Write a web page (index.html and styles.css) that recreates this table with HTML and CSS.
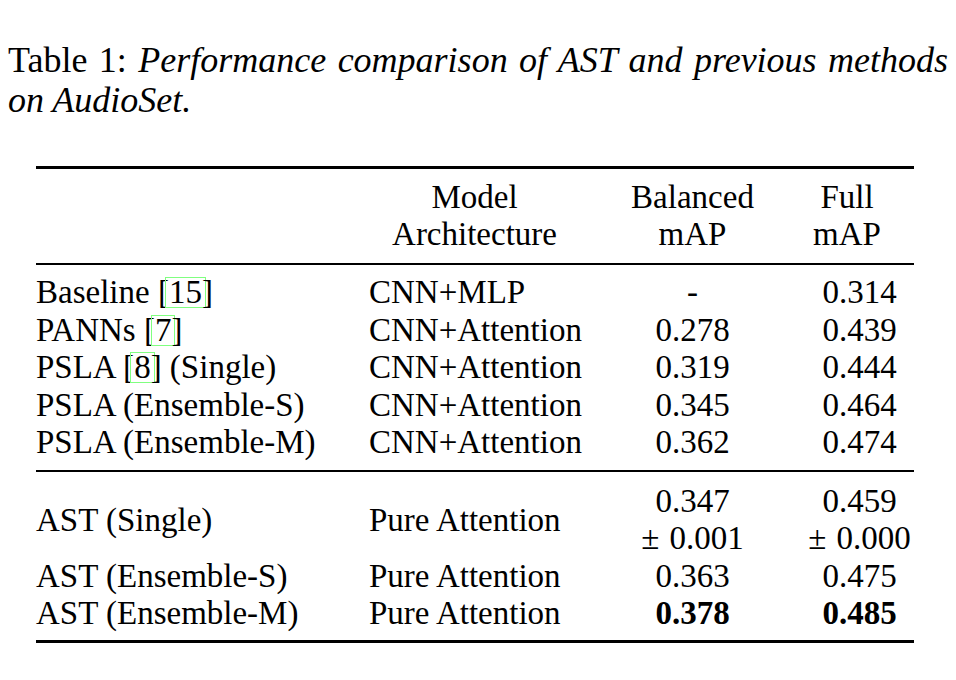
FILE: index.html
```html
<!DOCTYPE html>
<html>
<head>
<meta charset="utf-8">
<link rel="stylesheet" href="styles.css">
</head>
<body>
<div class="page">
  <div class="caption">
    <p class="cap-line cap-first"><span class="cap-label">Table 1:</span> <em>Performance comparison of AST and previous methods</em></p>
    <p class="cap-line"><em>on AudioSet.</em></p>
  </div>

  <div class="table">
    <div class="section head">
      <div class="cell"></div>
      <div class="cell center">Model<br>Architecture</div>
      <div class="cell center">Balanced<br>mAP</div>
      <div class="cell center full-head">Full<br>mAP</div>
    </div>

    <div class="section body">
      <div class="cell">Baseline [<span class="cite">15</span>]</div>
      <div class="cell">CNN+MLP</div>
      <div class="cell center">-</div>
      <div class="cell center">0.314</div>

      <div class="cell">PANNs [<span class="cite">7</span>]</div>
      <div class="cell">CNN+Attention</div>
      <div class="cell center">0.278</div>
      <div class="cell center">0.439</div>

      <div class="cell">PSLA [<span class="cite">8</span>] (Single)</div>
      <div class="cell">CNN+Attention</div>
      <div class="cell center">0.319</div>
      <div class="cell center">0.444</div>

      <div class="cell">PSLA (Ensemble-S)</div>
      <div class="cell">CNN+Attention</div>
      <div class="cell center">0.345</div>
      <div class="cell center">0.464</div>

      <div class="cell">PSLA (Ensemble-M)</div>
      <div class="cell">CNN+Attention</div>
      <div class="cell center">0.362</div>
      <div class="cell center">0.474</div>
    </div>

    <div class="section body ast">
      <div class="cell middle">AST (Single)</div>
      <div class="cell middle">Pure Attention</div>
      <div class="cell center">0.347<br><span class="pm">±</span>0.001</div>
      <div class="cell center">0.459<br><span class="pm">±</span>0.000</div>

      <div class="cell">AST (Ensemble-S)</div>
      <div class="cell">Pure Attention</div>
      <div class="cell center">0.363</div>
      <div class="cell center">0.475</div>

      <div class="cell">AST (Ensemble-M)</div>
      <div class="cell">Pure Attention</div>
      <div class="cell center bold">0.378</div>
      <div class="cell center bold">0.485</div>
    </div>
  </div>
</div>
</body>
</html>
```

FILE: styles.css
```css
html, body {
  margin: 0;
  padding: 0;
  background: #ffffff;
}

body {
  color: #000000;
  font-family: "Liberation Serif", "Times New Roman", serif;
}

.page {
  width: 956px;
  height: 680px;
  padding-top: 40px;
  box-sizing: border-box;
}

.caption {
  margin-left: 8px;
  width: 940px;
  font-size: 36px;
  line-height: 40px;
}

.cap-line {
  margin: 0;
  white-space: nowrap;
}

.cap-first {
  white-space: normal;
  text-align: justify;
  text-align-last: justify;
}

.caption em {
  font-style: italic;
}

.table {
  margin: 46px 0 0 36px;
  width: 878px;
  border-top: 3px solid #000;
  border-bottom: 3px solid #000;
  font-size: 33px;
  line-height: 37.4px;
}

.section {
  display: grid;
  grid-template-columns: 282px 211px 123px 109px;
  column-gap: 51px;
}

.head {
  padding: 10px 0 9px;
  border-bottom: 2px solid #000;
}

.body {
  padding: 9.5px 0 8.5px;
}

.ast {
  border-top: 2px solid #000;
  padding: 11px 0 7.5px;
}

.cell {
  white-space: nowrap;
}

.center {
  text-align: center;
}

.middle {
  align-self: center;
}

.full-head {
  padding-right: 25px;
}

.bold {
  font-weight: bold;
}

.pm {
  margin-right: 10px;
}

.cite {
  display: inline-block;
  line-height: 29px;
  padding: 0 3px;
  margin: 0 -4px;
  border: 1px solid #80ff80;
}
```
